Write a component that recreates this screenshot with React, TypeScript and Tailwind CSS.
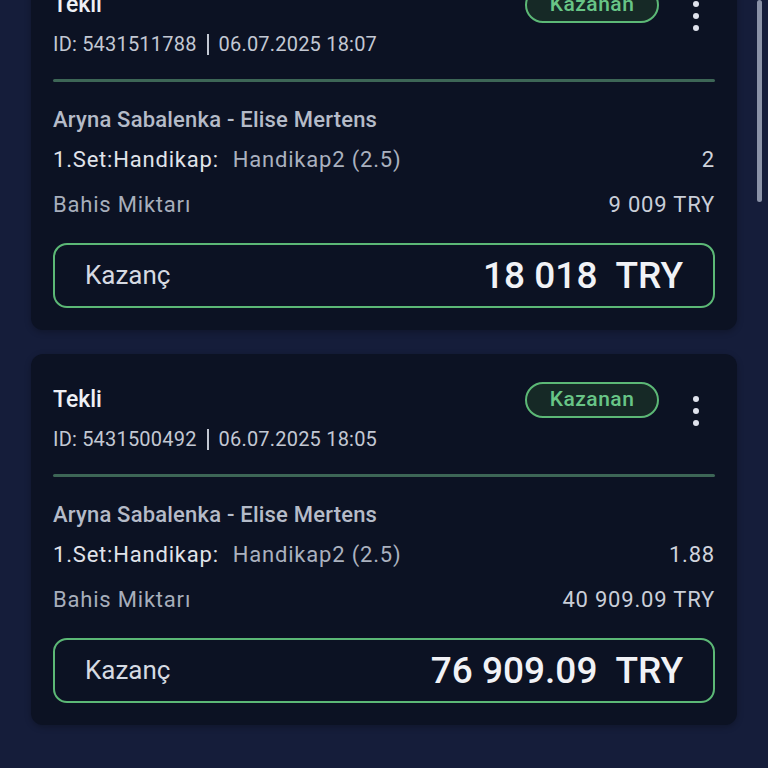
import React from "react";

type Bet = {
  id: string;
  date: string;
  match: string;
  market: string;
  pick: string;
  odds: string;
  stake: string;
  win: string;
};

const bets: Bet[] = [
  {
    id: "5431511788",
    date: "06.07.2025 18:07",
    match: "Aryna Sabalenka - Elise Mertens",
    market: "1.Set:Handikap:",
    pick: "Handikap2 (2.5)",
    odds: "2",
    stake: "9 009 TRY",
    win: "18 018",
  },
  {
    id: "5431500492",
    date: "06.07.2025 18:05",
    match: "Aryna Sabalenka - Elise Mertens",
    market: "1.Set:Handikap:",
    pick: "Handikap2 (2.5)",
    odds: "1.88",
    stake: "40 909.09 TRY",
    win: "76 909.09",
  },
];

function BetCard({ bet }: { bet: Bet }) {
  return (
    <div className="rounded-[12px] bg-[#0c1223] px-[22px] pt-[28px] pb-[22px] shadow-[0_2px_6px_rgba(0,0,0,0.25)]">
      {/* header */}
      <div className="flex items-start justify-between">
        <div className="flex flex-col">
          <div className="h-[36px] text-[23px] leading-[36px] font-medium text-[#eef0f5]">Tekli</div>
          <div className="mt-[9px] flex items-center text-[20px] leading-[24px] tracking-[0.2px] text-[#c3c8d3]">
            <span>ID: {bet.id}</span>
            <span className="mx-[10px] h-[21px] w-[2px] bg-[#c3c8d3]" />
            <span>{bet.date}</span>
          </div>
        </div>
        <div className="flex items-start">
          <div className="flex h-[36px] w-[134px] items-center justify-center rounded-full border-2 border-[#5cb876] bg-[#162926] text-[21px] font-medium tracking-[0.5px] text-[#68c586]">
            Kazanan
          </div>
          <div className="ml-[18px] flex w-[38px] flex-col items-center gap-[6px] pt-[14px]">
            <span className="h-[6px] w-[6px] rounded-full bg-[#dfe2ec]" />
            <span className="h-[6px] w-[6px] rounded-full bg-[#dfe2ec]" />
            <span className="h-[6px] w-[6px] rounded-full bg-[#dfe2ec]" />
          </div>
        </div>
      </div>

      <div className="mt-[23px] h-[3px] rounded-full bg-[#3d6656]" />

      {/* body */}
      <div className="mt-[26px] text-[22px] leading-[24px] font-medium tracking-[0.2px] text-[#b5bbc8]">{bet.match}</div>
      <div className="mt-[16px] flex items-center justify-between text-[22px] leading-[24px] tracking-[0.8px]">
        <div>
          <span className="text-[#e0e3ea]">{bet.market}</span>
          <span className="ml-[14px] text-[#aab1bf]">{bet.pick}</span>
        </div>
        <span className="text-[#d0d4dc]">{bet.odds}</span>
      </div>
      <div className="mt-[21px] flex items-center justify-between text-[22px] leading-[24px] tracking-[0.8px]">
        <span className="text-[#a7aebb]">Bahis Miktarı</span>
        <span className="text-[#c9ced8]">{bet.stake}</span>
      </div>

      <div className="mt-[26px] flex h-[65px] items-center justify-between rounded-[14px] border-2 border-[#5cb876] pl-[30px] pr-[30px]">
        <span className="text-[26px] text-[#d6dae2]">Kazanç</span>
        <span className="flex items-center text-[37px] font-medium text-[#f1f2f6]">
          {bet.win}
          <span className="ml-[18px]">TRY</span>
        </span>
      </div>
    </div>
  );
}

export default function App() {
  return (
    <div
      className="relative h-screen overflow-hidden bg-[#151d3a]"
      style={{ fontFamily: "Roboto, 'Noto Sans', sans-serif" }}
    >
      <div className="-mt-[41px] flex flex-col gap-[24px] px-[31px]">
        {bets.map((b) => (
          <BetCard key={b.id} bet={b} />
        ))}
      </div>
      {/* scrollbar */}
      <div className="absolute top-0 right-[6px] h-[202px] w-[5px] rounded-full bg-[#8a92a7]" />
    </div>
  );
}
